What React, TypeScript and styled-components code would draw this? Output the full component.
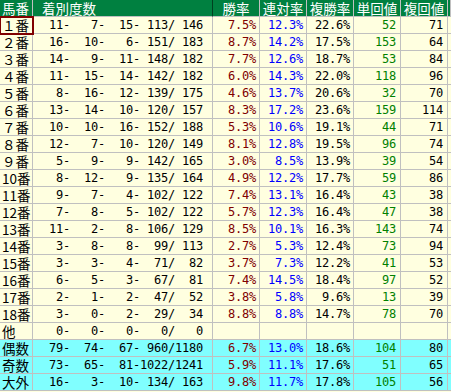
import React from "react";
import styled, { createGlobalStyle, css } from "styled-components";

/* === GLOBAL === */
const GlobalStyle = createGlobalStyle`
  html, body {
    margin: 0;
    padding: 0;
    background: #ffffe0;
  }
`;

const COLS = "33px 180px 47px 47px 47px 47px 47px 1fr";
const LINE = "#c0c0c0";
const KANJI = `"Noto Sans CJK JP", "DejaVu Sans", sans-serif`;
const MONO = `"DejaVu Sans Mono", "Noto Sans CJK JP", monospace`;

/* === STYLES === */
const Table = styled.div`
  display: flex;
  flex-direction: column;
  width: 451px;
`;

const Row = styled.div<{ $tone?: "head" | "cream" | "cyan" }>`
  display: grid;
  grid-template-columns: ${COLS};
  height: 17px;
  background: ${({ $tone }) =>
    $tone === "head" ? "#008040" : $tone === "cyan" ? "#80ffff" : "#ffffe0"};
`;

const HeadCell = styled.div<{ $align?: "flex-start" | "center"; $pad?: number; $dark?: boolean }>`
  box-sizing: border-box;
  height: 17px;
  display: flex;
  align-items: center;
  justify-content: ${({ $align }) => $align || "center"};
  border-right: 1px solid ${({ $dark }) => ($dark ? "#004020" : LINE)};
  border-bottom: 1px solid ${LINE};
  color: #fff;
  font-family: ${KANJI};
  font-size: 13.5px;
  line-height: 14px;
  white-space: nowrap;
  overflow: hidden;
  padding-left: ${({ $pad }) => $pad || 0}px;
`;

const LabelCell = styled.div<{ $selected?: boolean }>`
  box-sizing: border-box;
  height: 17px;
  display: flex;
  align-items: center;
  border-right: 1px solid ${LINE};
  border-bottom: 1px solid ${LINE};
  font-family: ${KANJI};
  font-size: 13.5px;
  line-height: 14px;
  color: #000;
  padding-left: 2px;
  white-space: nowrap;
  overflow: hidden;
  ${({ $selected }) =>
    $selected &&
    css`
      outline: 2px solid #800000;
      outline-offset: -1px;
      position: relative;
      z-index: 1;
    `}
`;

const Cell = styled.div<{ $color?: string; $padRight?: number }>`
  box-sizing: border-box;
  height: 17px;
  display: flex;
  align-items: center;
  justify-content: flex-end;
  border-right: 1px solid ${LINE};
  border-bottom: 1px solid ${LINE};
  font-family: ${MONO};
  font-size: 12px;
  letter-spacing: -0.22px;
  line-height: 14px;
  color: ${({ $color }) => $color || "#000"};
  padding-right: ${({ $padRight }) => $padRight ?? 3}px;
  white-space: pre;
  overflow: hidden;
`;

/* === DATA === */
type Rec = {
  label: string;
  c: [number, number, number, number, number];
  win?: string;
  ren?: string;
  fuku?: string;
  tan?: string;
  fkv?: string;
  tone?: "cream" | "cyan";
};

const rows: Rec[] = [
  { label: "１番", c: [11, 7, 15, 113, 146], win: "7.5%", ren: "12.3%", fuku: "22.6%", tan: "52", fkv: "71" },
  { label: "２番", c: [16, 10, 6, 151, 183], win: "8.7%", ren: "14.2%", fuku: "17.5%", tan: "153", fkv: "64" },
  { label: "３番", c: [14, 9, 11, 148, 182], win: "7.7%", ren: "12.6%", fuku: "18.7%", tan: "53", fkv: "84" },
  { label: "４番", c: [11, 15, 14, 142, 182], win: "6.0%", ren: "14.3%", fuku: "22.0%", tan: "118", fkv: "96" },
  { label: "５番", c: [8, 16, 12, 139, 175], win: "4.6%", ren: "13.7%", fuku: "20.6%", tan: "32", fkv: "70" },
  { label: "６番", c: [13, 14, 10, 120, 157], win: "8.3%", ren: "17.2%", fuku: "23.6%", tan: "159", fkv: "114" },
  { label: "７番", c: [10, 10, 16, 152, 188], win: "5.3%", ren: "10.6%", fuku: "19.1%", tan: "44", fkv: "71" },
  { label: "８番", c: [12, 7, 10, 120, 149], win: "8.1%", ren: "12.8%", fuku: "19.5%", tan: "96", fkv: "74" },
  { label: "９番", c: [5, 9, 9, 142, 165], win: "3.0%", ren: "8.5%", fuku: "13.9%", tan: "39", fkv: "54" },
  { label: "10番", c: [8, 12, 9, 135, 164], win: "4.9%", ren: "12.2%", fuku: "17.7%", tan: "59", fkv: "86" },
  { label: "11番", c: [9, 7, 4, 102, 122], win: "7.4%", ren: "13.1%", fuku: "16.4%", tan: "43", fkv: "38" },
  { label: "12番", c: [7, 8, 5, 102, 122], win: "5.7%", ren: "12.3%", fuku: "16.4%", tan: "47", fkv: "38" },
  { label: "13番", c: [11, 2, 8, 106, 129], win: "8.5%", ren: "10.1%", fuku: "16.3%", tan: "143", fkv: "74" },
  { label: "14番", c: [3, 8, 8, 99, 113], win: "2.7%", ren: "5.3%", fuku: "12.4%", tan: "73", fkv: "94" },
  { label: "15番", c: [3, 3, 4, 71, 82], win: "3.7%", ren: "7.3%", fuku: "12.2%", tan: "41", fkv: "53" },
  { label: "16番", c: [6, 5, 3, 67, 81], win: "7.4%", ren: "14.5%", fuku: "18.4%", tan: "97", fkv: "52" },
  { label: "17番", c: [2, 1, 2, 47, 52], win: "3.8%", ren: "5.8%", fuku: "9.6%", tan: "13", fkv: "39" },
  { label: "18番", c: [3, 0, 2, 29, 34], win: "8.8%", ren: "8.8%", fuku: "14.7%", tan: "78", fkv: "70" },
  { label: "他", c: [0, 0, 0, 0, 0] },
  { label: "偶数", c: [79, 74, 67, 960, 1180], win: "6.7%", ren: "13.0%", fuku: "18.6%", tan: "104", fkv: "80", tone: "cyan" },
  { label: "奇数", c: [73, 65, 81, 1022, 1241], win: "5.9%", ren: "11.1%", fuku: "17.6%", tan: "51", fkv: "65", tone: "cyan" },
  { label: "大外", c: [16, 3, 10, 134, 163], win: "9.8%", ren: "11.7%", fuku: "17.8%", tan: "105", fkv: "56", tone: "cyan" },
];

const pad = (n: number) => String(n).padStart(4, " ");
const fmtCounts = (c: Rec["c"]) =>
  `${pad(c[0])}-${pad(c[1])}-${pad(c[2])}-${pad(c[3])}/${pad(c[4])}`;

export default function App() {
  return (
    <>
      <GlobalStyle />
      <Table>
        <Row $tone="head">
          <HeadCell $align="flex-start" $pad={2}>馬番</HeadCell>
          <HeadCell $align="flex-start" $pad={9} $dark>着別度数</HeadCell>
          <HeadCell>勝率</HeadCell>
          <HeadCell>連対率</HeadCell>
          <HeadCell>複勝率</HeadCell>
          <HeadCell>単回値</HeadCell>
          <HeadCell>複回値</HeadCell>
          <HeadCell />
        </Row>
        {rows.map((r, i) => (
          <Row key={r.label} $tone={r.tone || "cream"}>
            <LabelCell $selected={i === 0}>{r.label}</LabelCell>
            <Cell $padRight={9}>{fmtCounts(r.c)}</Cell>
            <Cell $color="#800000">{r.win}</Cell>
            <Cell $color="#0000ff">{r.ren}</Cell>
            <Cell>{r.fuku}</Cell>
            <Cell $color="#008000" $padRight={4}>{r.tan}</Cell>
            <Cell $padRight={4}>{r.fkv}</Cell>
            <Cell />
          </Row>
        ))}
      </Table>
    </>
  );
}
